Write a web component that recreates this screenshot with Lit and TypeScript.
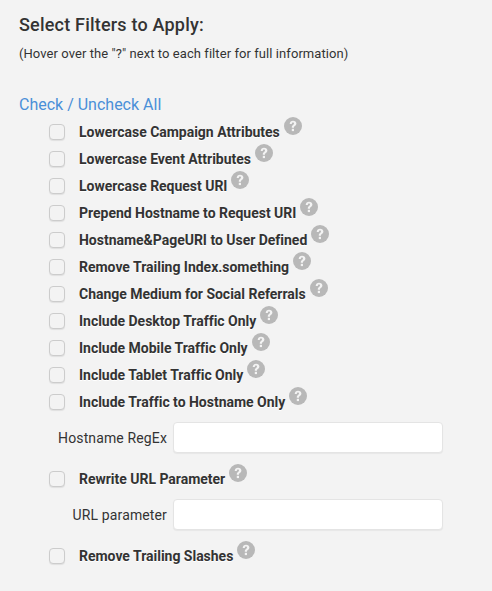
import { LitElement, html, css } from "lit";
import { customElement } from "lit/decorators.js";

const helpIcon = html`<svg class="help" viewBox="0 0 18 18" width="18" height="18" aria-hidden="true">
  <circle cx="9" cy="9" r="9" fill="#b8b8b8"></circle>
  <path d="M5.700 6.900c.1-2 1.500-3.200 3.400-3.200 1.900 0 3.300 1.200 3.300 2.800 0 1.200-.7 1.900-1.500 2.400-.7.500-.9.800-.9 1.400v.4H7.800v-.5c0-1.100.4-1.700 1.200-2.300.7-.5 1-.8 1-1.300 0-.6-.4-1-1-1-.7 0-1.100.4-1.200 1.300z" fill="#f3f3f3"></path>
  <rect x="7.800" y="11.800" width="2.200" height="2.300" fill="#f3f3f3"></rect>
</svg>`;

const topFilters = [
  "Lowercase Campaign Attributes",
  "Lowercase Event Attributes",
  "Lowercase Request URI",
  "Prepend Hostname to Request URI",
  "Hostname&PageURI to User Defined",
  "Remove Trailing Index.something",
  "Change Medium for Social Referrals",
  "Include Desktop Traffic Only",
  "Include Mobile Traffic Only",
  "Include Tablet Traffic Only",
  "Include Traffic to Hostname Only",
];

@customElement("app-root")
export class AppRoot extends LitElement {
  static styles = css`
    :host {
      display: block;
      height: 591px;
      overflow: hidden;
      background: #f3f3f3;
      color: #333;
      font-family: Roboto, "Liberation Sans", sans-serif;
    }
    .panel {
      padding: 14px 0 0 19px;
    }
    h3 {
      margin: 0;
      font-size: 18px;
      letter-spacing: 0.2px;
      line-height: 22px;
      font-weight: 500;
    }
    .hint {
      margin: 9px 0 0;
      font-size: 13px;
      letter-spacing: 0.07px;
      line-height: 17px;
    }
    .toggle-all {
      display: block;
      margin-top: 33px;
      font-size: 16px;
      line-height: 20px;
      color: #4a8fd8;
      text-decoration: none;
    }
    .filters {
      display: flex;
      flex-direction: column;
      margin: 4px 0 0 30px;
    }
    .row {
      display: flex;
      align-items: center;
      height: 27px;
    }
    .box {
      box-sizing: border-box;
      width: 16px;
      height: 16px;
      margin: 0 14px 1px 0;
      flex: none;
      border: 1px solid #ccc;
      border-radius: 4px;
      background: #f3f3f3;
      box-shadow: 0 1px 1px rgba(0, 0, 0, 0.08);
    }
    .name {
      margin-bottom: 1px;
      font-size: 14px;
      font-weight: 700;
      letter-spacing: -0.02px;
      line-height: 16px;
      color: #333;
      text-shadow: 0 1px 0 #fff;
    }
    .help {
      display: block;
      margin: -13px 0 0 4px;
      flex: none;
    }
    .field {
      display: flex;
      align-items: center;
      justify-content: flex-end;
      width: 394px;
      gap: 6px;
      font-size: 14px;
      letter-spacing: 0.13px;
    }
    .field.host,
    .field.url {
      margin-top: 6px;
      margin-bottom: 13px;
    }
    .field input {
      box-sizing: border-box;
      width: 270px;
      height: 31px;
      flex: none;
      border: 1px solid #e4e4e4;
      border-radius: 4px;
      background: #fff;
      box-shadow: 0 1px 1px rgba(0, 0, 0, 0.05);
    }
  `;

  private filterRow(name: string) {
    return html`<label class="row">
      <span class="box"></span>
      <span class="name">${name}</span>
      ${helpIcon}
    </label>`;
  }

  render() {
    return html`
      <div class="panel">
        <h3>Select Filters to Apply:</h3>
        <p class="hint">(Hover over the "?" next to each filter for full information)</p>
        <a class="toggle-all" href="#">Check / Uncheck All</a>
        <div class="filters">
          ${topFilters.map((f) => this.filterRow(f))}
          <div class="field host"><span>Hostname RegEx</span><input type="text" /></div>
          ${this.filterRow("Rewrite URL Parameter")}
          <div class="field url"><span>URL parameter</span><input type="text" /></div>
          ${this.filterRow("Remove Trailing Slashes")}
        </div>
      </div>
    `;
  }
}
